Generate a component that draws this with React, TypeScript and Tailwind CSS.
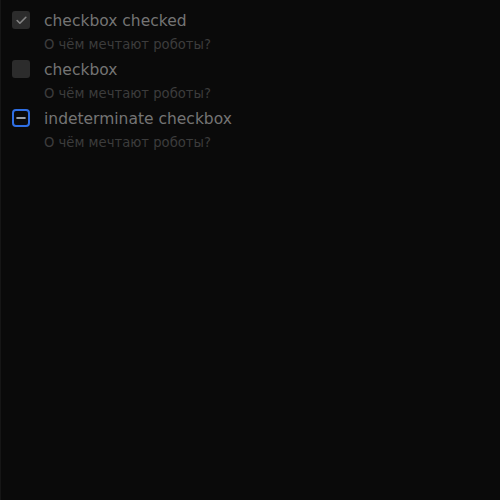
import { Check, Minus } from "lucide-react";

type Item = { label: string; state: "checked" | "unchecked" | "indeterminate" };

const items: Item[] = [
  { label: "checkbox checked", state: "checked" },
  { label: "checkbox", state: "unchecked" },
  { label: "indeterminate checkbox", state: "indeterminate" },
];

function Box({ state }: { state: Item["state"] }) {
  if (state === "indeterminate") {
    return (
      <div className="w-[18px] h-[18px] rounded-[4px] border-2 border-[#2f6fe4] flex items-center justify-center">
        <Minus className="w-[14px] h-[14px] text-[#c8cfdc]" strokeWidth={2.5} />
      </div>
    );
  }
  return (
    <div className="w-[18px] h-[18px] rounded-[3px] bg-[#2c2c2c] flex items-center justify-center">
      {state === "checked" && <Check className="w-[13px] h-[13px] text-[#858585]" strokeWidth={3} />}
    </div>
  );
}

export default function App() {
  return (
    <div className="w-[500px] h-[500px] bg-[#0a0a0a] border-l border-[#161616] font-['DejaVu_Sans',sans-serif] pl-[11px] pt-[11px]">
      <div className="flex flex-col">
        {items.map((it) => (
          <div key={it.label} className="flex gap-[14px] h-[49px]">
            <Box state={it.state} />
            <div className="flex flex-col -mt-[1px]">
              <span className="text-[15.5px] leading-[22px] text-[#747474]">{it.label}</span>
              <span className="text-[13.2px] leading-[20px] mt-[3px] text-[#3c3c3c]">О чём мечтают роботы?</span>
            </div>
          </div>
        ))}
      </div>
    </div>
  );
}
